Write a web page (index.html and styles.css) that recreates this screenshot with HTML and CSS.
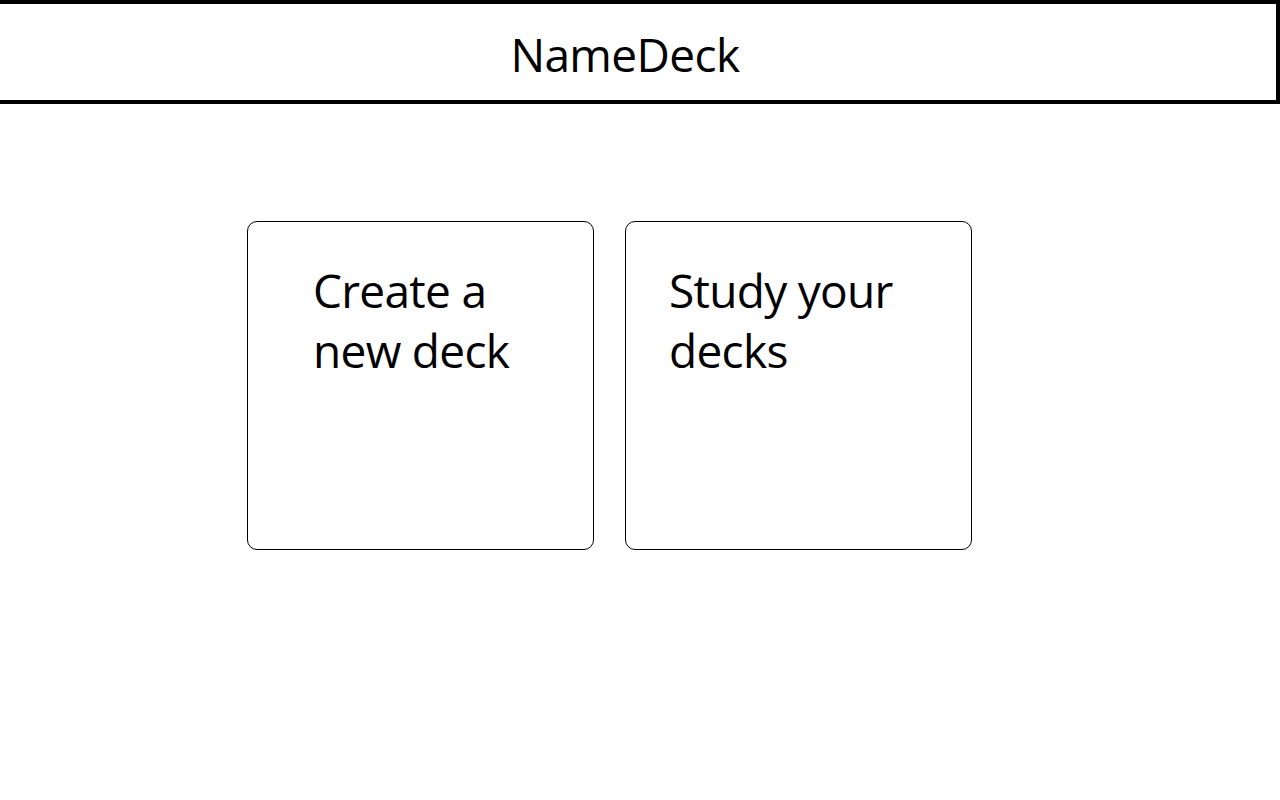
FILE: index.html
```html
<!DOCTYPE html>
<html lang="en">
<head>
<meta charset="utf-8">
<title>NameDeck</title>
<link rel="stylesheet" href="styles.css">
</head>
<body>
<header class="topbar">
  <h1 class="brand">NameDeck</h1>
</header>
<main class="options">
  <a class="card card-create" href="#">Create a new deck</a>
  <a class="card card-study" href="#">Study your decks</a>
</main>
</body>
</html>
```

FILE: styles.css
```css
html, body {
  margin: 0;
  padding: 0;
  background: #ffffff;
}

body {
  font-family: "Open Sans", "Noto Sans", sans-serif;
  color: #000000;
  width: 1280px;
  height: 800px;
  overflow: hidden;
}

.topbar {
  box-sizing: border-box;
  height: 104px;
  border-top: 4px solid #000;
  border-right: 4px solid #000;
  border-bottom: 4px solid #000;
  display: flex;
  align-items: center;
  justify-content: center;
  padding-right: 26px;
  padding-top: 4px;
}

.brand {
  margin: 0;
  font-weight: 400;
  font-size: 46px;
  line-height: 60px;
  letter-spacing: -0.6px;
}

.options {
  display: flex;
  gap: 31px;
  padding-top: 117px;
  padding-left: 247px;
}

.card {
  box-sizing: border-box;
  width: 347px;
  height: 329px;
  border: 1px solid #000;
  border-radius: 10px;
  color: #000;
  text-decoration: none;
  font-size: 46px;
  line-height: 60px;
  letter-spacing: -0.7px;
  padding-top: 38px;
}

.card-create {
  padding-left: 65px;
  padding-right: 60px;
}

.card-study {
  padding-left: 43px;
  padding-right: 60px;
}
```
